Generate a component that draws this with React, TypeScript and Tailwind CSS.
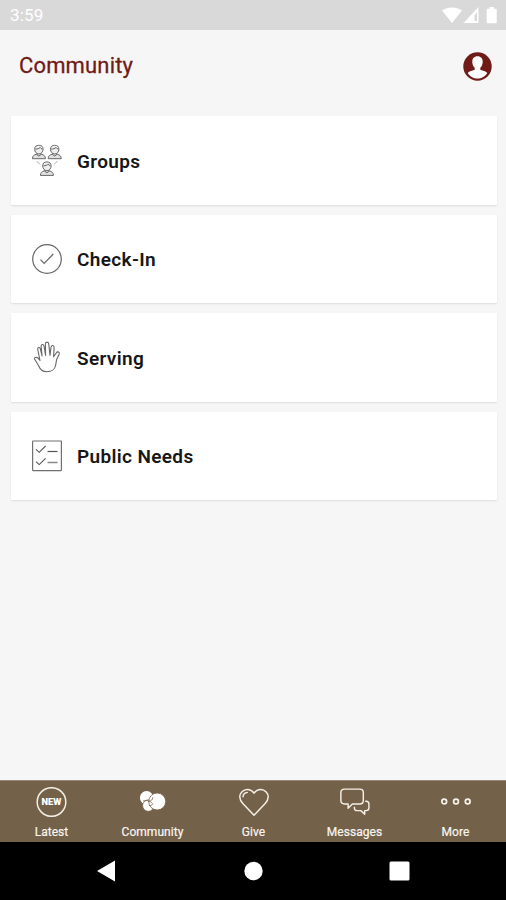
import React from "react";

function GroupsIcon() {
  const person = (x: number, y: number) => (
    <g transform={`translate(${x} ${y})`}>
      <path d="M.7 14.2c0-2.800 1.500-3.800 4-4.500l1.200-.8h2.600l1.200.8c2.500.7 4 1.700 4 4.500Z" fill="#e2e2e2" />
      <path d="M3 4.700C3 2 4.600.7 7.200.7s4.200 1.300 4.200 4c0 2.600-1.800 4.800-4.200 4.800S3 7.300 3 4.700ZM3.800 4.600c2 0 3.800-.6 4.700-1.700.4.900 1.100 1.400 2.100 1.600" fill="#eee" />
      <path d="M5.200 9v1.200l2 1.400 2-1.400V9" fill="none" />
    </g>
  );
  return (
    <svg width="30" height="32" viewBox="0 0 30 32" fill="none" stroke="#666" strokeWidth="1" className="translate-y-[0.5px]">
      {person(-0.3, 0)}
      {person(15.5, 0)}
      <path d="m4.500 16.500 3.500 3.500M25.500 16.500 22 20" stroke="#aaa" />
      {person(7.700, 16.700)}
    </svg>
  );
}

function CheckIcon() {
  return (
    <svg width="30" height="30" viewBox="0 0 30 30" fill="none" stroke="#666">
      <circle cx="15" cy="15" r="14.300" strokeWidth="1.200" />
      <path d="m8.500 15.700 3.600 3.800 9.200-9.500" strokeWidth="1.200" />
    </svg>
  );
}

function HandIcon() {
  return (
    <svg width="30" height="32" viewBox="0 0 30 32" fill="none" stroke="#666" strokeWidth="1.100" strokeLinejoin="round" strokeLinecap="round">
      <path d="M8 19.500 6.100 17.200C4.500 15.600 2 16.500 2.500 18L6.500 24.500C8 28.500 10.500 30.700 15 30.700s8.200-2.600 8.700-6.900l.9-5.200 2.500-5.200c1-2.300-1.500-3.600-2.900-1.400L21.600 15.700l.5-9c.1-2.600-2.500-3-3.100-.5L18 14.400 16.700 2.800c-.2-2.300-3.200-2.300-3.300 0L13.600 14.400 12 5c-.5-2.200-3-1.800-2.900.4l1 9.600L8.300 7.700c-.7-2-3-1.300-2.600.7Z" />
    </svg>
  );
}

function ListIcon() {
  return (
    <svg width="30" height="32" viewBox="0 0 30 32" fill="none" stroke="#555">
      <rect x=".6" y="1" width="28.800" height="29.600" rx=".5" strokeWidth="1.200" stroke="#707070" />
      <path d="m4 9.300 3.200 3L13.600 6M4 21.600l3.200 3 6.400-6.300" strokeWidth="1.100" />
      <path d="M15.500 11.500h10" strokeWidth="1.200" />
      <path d="M15.500 22.500h10" strokeWidth="1.500" stroke="#888" />
    </svg>
  );
}

const cards = [
  { label: "Groups", icon: <GroupsIcon /> },
  { label: "Check-In", icon: <CheckIcon /> },
  { label: "Serving", icon: <HandIcon /> },
  { label: "Public Needs", icon: <ListIcon /> },
];

function NewIcon() {
  return (
    <svg width="32" height="30" viewBox="0 0 32 30">
      <circle cx="15.500" cy="15" r="14.300" fill="none" stroke="#f3ede4" strokeWidth="1.500" />
      <text x="15.500" y="18.300" textAnchor="middle" textLength="20" lengthAdjust="spacingAndGlyphs" fill="#fff" className="text-[9px] font-black">NEW</text>
    </svg>
  );
}

function CommunityIcon() {
  return (
    <svg width="30" height="30" viewBox="0 0 30 30" fill="#fff">
      <circle cx="8.600" cy="10.700" r="6.700" />
      <circle cx="10.300" cy="18.600" r="5.700" stroke="#736149" strokeWidth=".8" />
      <circle cx="19.200" cy="14.500" r="8.500" stroke="#736149" strokeWidth=".8" />
      <path d="M10.500 14.500c2.500-.2 4-1.800 4.400-4.200M5 14c3.500-1 7-.6 9.500 2.700M11 18.500c1.800.2 3-.4 4-1.700" fill="none" stroke="#736149" strokeWidth=".8" />
    </svg>
  );
}

function HeartIcon() {
  return (
    <svg width="30" height="30" viewBox="0 0 30 30" fill="none" stroke="#f5efe6" strokeWidth="1.500" strokeLinejoin="round" strokeLinecap="round">
      <path d="M15 28.300 3.800 16.500C-.3 12.200.2 7.600 2.800 4.900 6.400 1.200 12 1.800 15 6.200c3-4.400 8.600-5 12.200-1.300 2.600 2.700 3.100 7.300-1 11.600Z" />
      <path d="M4 9.800c.2-2.500 1.700-4 4.200-4.200" />
    </svg>
  );
}

function MessagesIcon() {
  return (
    <svg width="30" height="30" viewBox="0 0 31 30" fill="none" stroke="#f5efe6" strokeWidth="1.500" strokeLinejoin="round">
      <path d="M4.500 1.700h16c2.200 0 3.600 1.400 3.600 3.600v8.200c0 2.200-1.400 3.600-3.600 3.600h-7.700l-4.400 4.400v-4.400H4.500c-2.200 0-3.600-1.400-3.600-3.600V5.300c0-2.200 1.400-3.600 3.600-3.600Z" />
      <path d="M26 14.200h1c1.900 0 2.900 1 2.900 2.900V21c0 1.900-1 2.900-2.900 2.900h-1.500v3.700l-4-3.700h-4c-1.700 0-2.600-.9-2.600-2.600v-1.400" />
    </svg>
  );
}

function MoreIcon() {
  return (
    <svg width="30" height="30" viewBox="0 0 30 30" fill="none" stroke="#f8f3ed" strokeWidth="1.700">
      <circle cx="3.200" cy="14.500" r="2.400" />
      <circle cx="15" cy="14.500" r="2.400" />
      <circle cx="26.700" cy="14.500" r="2.400" />
    </svg>
  );
}

const tabs = [
  { label: "Latest", icon: <NewIcon /> },
  { label: "Community", icon: <CommunityIcon /> },
  { label: "Give", icon: <HeartIcon /> },
  { label: "Messages", icon: <MessagesIcon /> },
  { label: "More", icon: <MoreIcon /> },
];

export default function App() {
  return (
    <div className="flex h-[900px] w-[506px] flex-col overflow-hidden bg-[#f6f6f6] font-['Roboto',sans-serif]">
      <div className="flex h-[30px] shrink-0 items-center justify-between bg-[#d9d9d9] pr-2 pl-[10px] text-[17px] text-white">
        <span className="pt-[2px] tracking-[0.2px]">3:59</span>
        <svg width="56" height="18" viewBox="0 0 56 18" fill="#fff">
          <path d="M0 4.500C5.500.5 14.500.5 20 4.500L10 17Z" />
          <path d="M36.500 1v16h-15Z" />
          <path d="M35 6v9h-2.500V9.500Z" fill="#d9d9d9" />
          <path d="M47.500 1h4.500v1.800h1.700q1 0 1 1v12.400q0 1-1 1h-8q-1 0-1-1V3.800q0-1 1-1h1.800Z" />
        </svg>
      </div>
      <header className="flex h-[86px] shrink-0 items-start justify-between pr-[14px] pl-[19px]">
        <h1 className="mt-[21px] text-[22px] leading-[30px] font-normal tracking-[0.15px] text-[#701b17] [-webkit-text-stroke:0.3px_#701b17]">Community</h1>
        <svg width="29" height="29" viewBox="0 0 29 29" className="mt-[22px]">
          <circle cx="14.500" cy="14.500" r="14.200" fill="#701b17" />
          <path d="M14.500 4.300c-3.400 0-5.300 2.200-5.200 5.600.1 2.500 1 4.600 2.400 5.900v2c-2.800.9-5.200 1.500-7 3.200 2 3.400 5.800 5.600 9.800 5.600s7.800-2.200 9.800-5.600c-1.800-1.700-4.200-2.300-7-3.200v-2c1.400-1.300 2.300-3.400 2.400-5.900.1-3.400-1.800-5.600-5.200-5.600Z" fill="#fff" />
        </svg>
      </header>
      <main className="flex flex-1 flex-col gap-[10px] pr-[9.5px] pl-[10.5px]">
        {cards.map((card) => (
          <div key={card.label} className="flex h-[88.500px] items-center gap-[15px] rounded-[1px] bg-white pl-[21.5px] shadow-[0_1px_2px_rgba(0,0,0,0.1)]">
            <span className="flex w-[30px] justify-center">{card.icon}</span>
            <span className="pt-[3px] text-[19px] leading-6 font-semibold tracking-[0.35px] text-[#161616]">{card.label}</span>
          </div>
        ))}
      </main>
      <nav className="grid h-[62px] shrink-0 grid-cols-5 border-t border-[#978978] bg-[#736149] pl-[1px]">
        {tabs.map((tab) => (
          <div key={tab.label} className="flex flex-col items-center pt-[6px] text-[#faf5ef]">
            {tab.icon}
            <span className="mt-[7px] text-[12px] leading-4 tracking-[0.05px] [-webkit-text-stroke:0.2px_#faf5ef]">{tab.label}</span>
          </div>
        ))}
      </nav>
      <div className="flex h-[58px] shrink-0 items-center justify-center bg-black">
        <svg width="314" height="22" viewBox="0 0 314 22" fill="#fff">
          <path d="M19 .5v21L1 11Z" />
          <circle cx="157.500" cy="11" r="9.200" />
          <rect x="293.500" y="1.500" width="20" height="19" rx="1.500" />
        </svg>
      </div>
    </div>
  );
}
